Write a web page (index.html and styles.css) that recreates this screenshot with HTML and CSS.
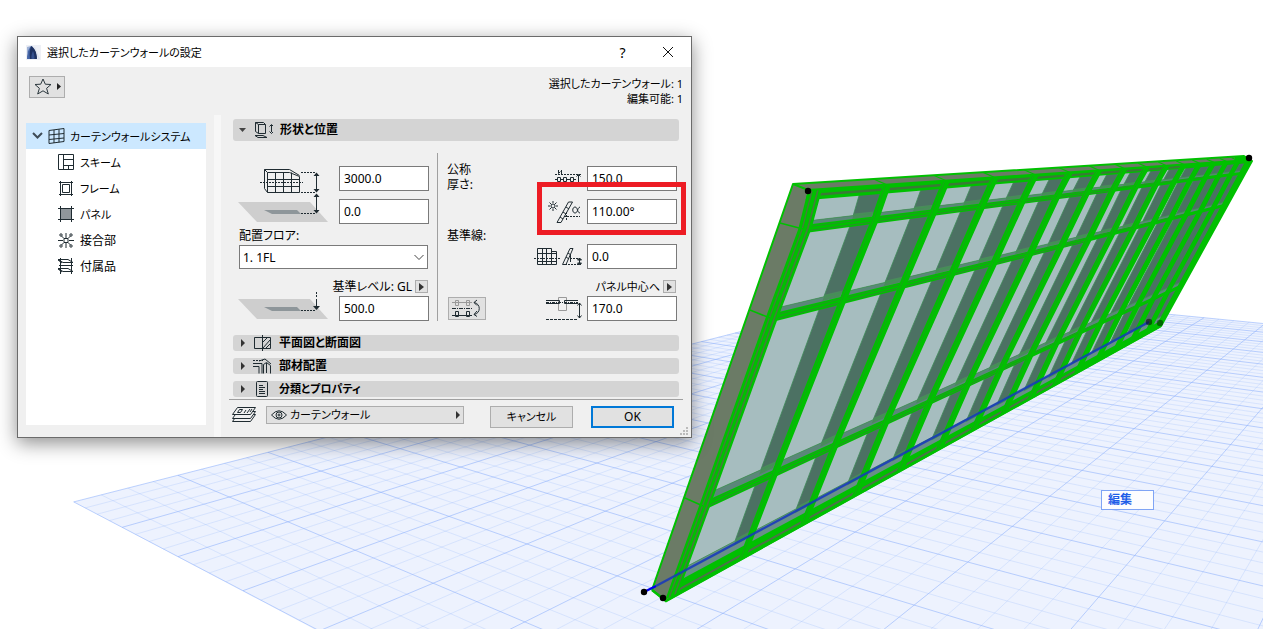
FILE: index.html
```html
<!DOCTYPE html>
<html lang="ja">
<head>
<meta charset="utf-8">
<title>選択したカーテンウォールの設定</title>
<link rel="stylesheet" href="styles.css">
</head>
<body>
<main class="viewport">
  <svg class="scene" id="scene" viewBox="0 0 1263 629" preserveAspectRatio="xMinYMin slice" aria-hidden="true"></svg>
  <button class="edit-tag" type="button">編集</button>

  <section class="dialog" role="dialog" aria-labelledby="dlg-title">
    <header class="titlebar">
      <svg class="app-icon" width="15" height="15" viewBox="0 0 15 15"><path d="M1 2l4-1L1 9z" fill="#9fb2d6"/><path d="M1 14C1 7 3 2 6 1l1 2-3 11z" fill="#4767a8"/><path d="M5 1c4 2 6 7 6 13H4C3 9 4 4 5 1z" fill="#1d3162"/><path d="M5.500 14C5 11 6 8 7 6c1 2 1.500 5 1.500 8z" fill="#35508e"/><path d="M9 2l5 12h-2C11 9 10 5 8 2z" fill="#dde2ee"/></svg>
      <h1 class="title dense" id="dlg-title">選択したカーテンウォールの設定</h1>
      <button class="win-btn" type="button" aria-label="ヘルプ">?</button>
      <button class="win-btn" type="button" aria-label="閉じる"><svg width="12" height="12" viewBox="0 0 12 12"><path d="M1 1l10 10M11 1L1 11" stroke="#111" fill="none"/></svg></button>
    </header>

    <div class="toolbar">
      <button class="fav" type="button" aria-label="お気に入り">
        <svg width="34" height="20" viewBox="0 0 34 20"><path d="M13 2l2.300 5.200 5.700.3-4.400 3.800 1.700 5.700L13 13.800 7.700 17l1.700-5.700L5 7.500l5.700-.3z" fill="none" stroke="#2b373d"/><path d="M27 6l4 3.500-4 3.500z" fill="#222"/></svg>
      </button>
      <p class="counts dense">選択したカーテンウォール: 1<br>編集可能: 1</p>
    </div>

    <div class="body">
      <nav class="tree">
        <ul class="tree-list">
          <li><a class="node root dense" href="#system">
            <svg width="11" height="8" viewBox="0 0 11 8"><path d="M1 1l4.500 4.500L10 1" fill="none" stroke="#3f4c57" stroke-width="2"/></svg>
            <svg width="17" height="17" viewBox="0 0 17 17" class="ic"><path d="M1 2.500L16 .5v13L1 15.500zM6 2v13M11 1.300v13M1 7l15-1.500M1 11.500L16 10"/></svg>
            カーテンウォールシステム</a></li>
          <li><a class="node" href="#scheme"><svg width="17" height="17" viewBox="0 0 17 17" class="ic"><path d="M.5.5h15v15H.5zM5.500.5v15M5.500 5.500h10M5.500 11.500h10M10.500 11.500v4"/></svg><span class="dense">スキーム</span></a></li>
          <li><a class="node" href="#frame"><svg width="17" height="17" viewBox="0 0 17 17" class="ic"><path d="M2.500 2.500h11v12h-11zM4.500 4.500h7v8h-7zM1 2.500h14M1 14.500h14M2.500 1v15M13.500 1v15"/></svg><span class="dense">フレーム</span></a></li>
          <li><a class="node" href="#panel"><svg width="17" height="17" viewBox="0 0 17 17" class="ic"><path fill="#8f969b" d="M2.500 2.500h11v11h-11z"/><path d="M2.500 0v16M13.500 0v16M0 2.500h16M0 13.500h16"/></svg><span class="dense">パネル</span></a></li>
          <li><a class="node" href="#junction"><svg width="17" height="17" viewBox="0 0 17 17" class="ic"><path d="M0 8.500h5M11 8.500h5M8 1v5M8 11v5M3 3.500l3 3M13 3.500l-3 3M3 13.500l3-3M13 13.500l-3-3M6 6.500h4v4H6z"/><g fill="#fff"><circle cx="3" cy="3" r="1.200"/><circle cx="13" cy="3" r="1.200"/><circle cx="3" cy="14" r="1.200"/><circle cx="13" cy="14" r="1.200"/></g></svg>接合部</a></li>
          <li><a class="node" href="#accessory"><svg width="17" height="17" viewBox="0 0 17 17" class="ic"><path d="M2.500 0v16M13.500 0v16M0 1.500h10l5 3H5zM1 7.500h14M0 10.500h10l5 3H5zM0 2l4 3M0 11l4 3"/></svg>付属品</a></li>
        </ul>
      </nav>
      <div class="splitter"></div>

      <div class="settings">
        <div class="sections">
          <button class="section open" type="button">
            <svg width="9" height="6" viewBox="0 0 9 6"><path d="M1 1h7L4.500 5z" fill="#444"/></svg>
            <svg class="ic" width="19" height="18" viewBox="0 0 19 18"><path d="M1.500 1.500h8l2 2v9h-7l-3-2zM4.500 3.500h7M1.500 1.500l3 2v9M1 14.500h8l4 2H4z"/><path d="M17.500 4v7M15.500 5.500l2-2 2 2M15.500 10.500l2 2 2-2"/></svg>
            形状と位置</button>

          <div class="panes">
            <div class="pane left">
              <div class="row">
                <svg width="90" height="58" viewBox="0 0 90 58"><path d="M0 36h72l18 20H19z" fill="#cecece"/><path d="M26 44h33l4 4H34z" fill="#8e969a"/><g class="ic"><path d="M29.500 6.500h22l10 4v16h-32zM37.500 6.500v20M45.500 6.500v20M53.500 6.500v20M29.500 13.500h32M29.500 20.500h32M26.500 3.500h25l10 6M26.500 3.500v19l3 4M26.500 3.500l3 3"/><path stroke-dasharray="2 1" d="M22 16.500h43M63 6.500h15M63 26.500h15M63 47.500h15"/><path d="M78.500 8v17M78.500 29v17"/></g><path class="tip" d="M75.500 10l3-3.500 3 3.500zM75.500 23l3 3.500 3-3.500zM75.500 31l3-3.500 3 3.500zM75.500 44l3 3.500 3-3.500z"/></svg>
                <div class="stack">
                  <input class="field" aria-label="高さ" value="3000.0">
                  <input class="field" aria-label="オフセット" value="0.0">
                </div>
              </div>
              <label class="caption" for="floor">配置フロア:</label>
              <div class="pick">
                <select class="select" id="floor"><option>1. 1FL</option></select>
                <svg class="chev" width="10" height="7" viewBox="0 0 10 7"><path d="M.5 1L5 5.500 9.500 1" fill="none" stroke="#444"/></svg>
              </div>
              <div class="ref"><label for="level">基準レベル: GL</label><button class="mini" type="button" aria-label="基準レベルの選択"></button></div>
              <div class="row">
                <svg width="90" height="25" viewBox="0 4 90 25" overflow="visible"><path d="M0 7h72l18 20H19z" fill="#cecece"/><path d="M26 15h33l4 4H34z" fill="#8e969a"/><path class="ic" stroke-dasharray="2 1" d="M63 18.500h14M78.500 0v6"/><path class="ic" d="M78.500 7v9"/><path class="tip" d="M75 14l3.500 4 3.500-4z"/></svg>
                <input class="field" id="level" value="500.0">
              </div>
            </div>

            <div class="pane right">
              <div class="row">
                <label class="lead two" for="thick">公称<br>厚さ:</label>
                <svg class="ic" width="27" height="17" viewBox="0 0 27 17"><path stroke-dasharray="2 1" d="M0 4.500h26M5 15.500h16"/><path d="M0 9.500h2M5 9.500h4M12 9.500h4M19 9.500h2M2.500 7.500h3v4h-3zM8.500 7.500h3v4h-3zM15.500 7.500h3v4h-3zM3.500 0v3.500l2-2M6.500 0v4"/><path d="M23.500 5v9M21.500 6.500l2-2 2 2M21.500 12.500l2 2 2-2"/></svg>
                <input class="field" id="thick" value="150.0">
              </div>
              <div class="row next">
                <svg class="ic" width="34" height="24" viewBox="0 0 34 24"><circle cx="5" cy="6" r="2"/><path d="M5 1v2M5 9v2M0 6h2M8 6h2M1.500 2.500l2 2M8.500 2.500l-2 2M1.500 9.500l2-2M8.500 9.500l-2-2"/><path d="M9 22.500L20.500 2h4L13 22.500zM15 12l3 2M18 7l3 2M12 17l3 2"/><path d="M32 7c-3 1-2 6-5 6-3 0-3-6 0-6 3 0 2 6 5 6"/><path stroke-dasharray="2 1" d="M16 16.500h16M18.500 12v8"/></svg>
                <input class="field" aria-label="傾斜角度" value="110.00°">
              </div>
              <label class="heading" for="offset">基準線:</label>
              <div class="row">
                <svg class="ic" width="48" height="20" viewBox="0 0 48 20"><path d="M3.500 1.500h14v16h-14zM17.500 4.500h5v13h-5M8.500 1.500v16M12.500 1.500v16M3.500 6.500h19M3.500 14.500h19"/><path stroke-dasharray="2 1" d="M0 11.500h26M31 17.500h16M36 11.500h9"/><path d="M28.500 17.500L36 1.500h3L32 17.500zM32 10l3 2M34 6l3 2M36.500 7v8M45.500 11v6"/><path fill="#2b373d" d="M43.500 13l2-2 2 2zM43.500 16l2 2 2-2z"/></svg>
                <input class="field" id="offset" value="0.0">
              </div>
              <div class="ref"><label class="dense" for="center">パネル中心へ</label><button class="mini" type="button" aria-label="基準の選択"></button></div>
              <div class="row">
                <button class="flip" type="button" aria-label="反転"><svg class="ic" width="30" height="19" viewBox="0 0 30 19"><path stroke="#999" d="M0 3.500h20M3.500 1.500h3v5h-3zM14.500 1.500h3v5h-3z"/><path stroke-dasharray="4 1 1 1" d="M0 9.500h21"/><path d="M0 16.500h20M3.500 12.500h3v5h-3zM14.500 12.500h3v5h-3z"/><path d="M22 3.500c7 1 7 11 0 12M25 1l-3 2.500 3 3M25 12l-3 3.500 3 2"/></svg></button>
                <svg class="ic push" width="36" height="25" viewBox="0 0 36 25"><path stroke="#999" d="M12.500 1.500h8v13h-8z"/><path stroke-dasharray="3 1 1 1" d="M0 6.500h32"/><path d="M0 4.500h13.500v3H0M32 4.500H18.500v3H32"/><path stroke-dasharray="3 1" d="M0 23.500h32"/><path d="M33.500 7v15M31.500 9.500l2-2.500 2 2.500M31.500 19.500l2 2.500 2-2.500"/></svg>
                <input class="field" id="center" value="170.0">
              </div>
            </div>
          </div>

          <div class="closed">
            <button class="section" type="button">
              <svg width="6" height="8" viewBox="0 0 6 8"><path d="M1 0l4 4-4 4z" fill="#333"/></svg>
              <svg class="ic" width="19" height="16" viewBox="0 0 19 16"><path d="M1.500 2.500h8v11h-8zM9.500 0v16M9.500 2.500h8v11h-8zM10 7l5-5M10 13L17 5M13 13l4-4"/></svg>
              平面図と断面図</button>
            <button class="section" type="button">
              <svg width="6" height="8" viewBox="0 0 6 8"><path d="M1 0l4 4-4 4z" fill="#333"/></svg>
              <svg class="ic" width="19" height="16" viewBox="0 0 19 16"><path d="M0 5.500h9v10M0 8.500h6v7M10.500 15.500v-9l3-2 4 3v8M13.500 5v10M6 3l6-2 6 5"/><path stroke-dasharray="2 1" d="M0 2.500h10"/></svg>
              部材配置</button>
            <button class="section" type="button">
              <svg width="6" height="8" viewBox="0 0 6 8"><path d="M1 0l4 4-4 4z" fill="#333"/></svg>
              <svg class="ic" width="19" height="16" viewBox="0 0 19 16"><path d="M3.500 1.500q0-1 1-1h9q1 0 1 1v13q0 1-1 1h-9q-1 0-1-1zM6 4.500h4M6 6.500h6M6 8.500h4M6 10.500h6M6 12.500h6"/></svg>
              <span class="dense">分類とプロパティ</span></button>
          </div>
        </div>

        <footer class="footer">
          <svg class="ic" width="26" height="17" viewBox="0 0 26 17"><path fill="#f0f0f0" d="M1.500 15.500h18l5-7h-18z"/><path fill="#f0f0f0" d="M1.500 12.500h18l5-7h-18z"/><path fill="#f0f0f0" d="M1.500 8.500h18l5-7h-18zM6.500 6.500h3l2-3h-3zM13 7l2-3M16 7l3-4M19 6l2-3"/></svg>
          <button class="layer" type="button">
            <svg class="ic" width="16" height="12" viewBox="0 0 16 12"><path d="M.5 6Q8-2.500 15.500 6 8 14.500.5 6z"/><circle cx="8" cy="6" r="3"/><circle cx="8" cy="6" r="1"/></svg>
            <span class="layer-name dense">カーテンウォール</span>
            <svg width="6" height="8" viewBox="0 0 6 8"><path d="M1 0l4 4-4 4z" fill="#333"/></svg>
          </button>
          <button class="action dense" type="button">キャンセル</button>
          <button class="action primary" type="submit">OK</button>
        </footer>
      </div>
    </div>
    <svg class="grip" width="8" height="8" viewBox="0 0 8 8"><path fill="#bbb" d="M6 0h2v2H6zM3 3h2v2H3zM6 3h2v2H6zM0 6h2v2H0zM3 6h2v2H3zM6 6h2v2H6z"/></svg>
    <div class="marker"></div>
  </section>
</main>
<script src="scene.js"></script>
</body>
</html>
```
FILE: styles.css
```css
* { box-sizing: border-box; }
body, h1, p, ul { margin: 0; padding: 0; }
body, button, input, select {
  font-family: "Noto Sans", "Noto Sans CJK JP", sans-serif;
  font-size: 12px;
  font-feature-settings: "palt";
  color: #000;
}
button { cursor: pointer; }
.dense { font-size: 11px; }
.viewport { position: relative; min-height: 100vh; overflow: hidden; background: #fff; }
.scene { position: absolute; inset: 0; width: 100%; height: 100%; }
.ic { fill: none; stroke: #1f2b31; stroke-width: 1; }
.tip { fill: #1f2b31; }

.edit-tag {
  position: absolute; left: 1101px; top: 490px;
  width: 53px; height: 20px; padding: 0 6px;
  border: 1px solid #7fa4f5; background: #fcfdff;
  color: #1f5fe8; font-weight: 700; text-align: left; line-height: 18px;
}

.dialog {
  position: absolute; left: 17px; top: 36px; width: 675px;
  display: flex; flex-direction: column;
  background: #f0f0f0; border: 1px solid #6b6b6b;
  box-shadow: 0 5px 18px rgba(0, 0, 0, .45);
}
.titlebar { display: flex; align-items: center; height: 30px; padding: 0 1px 0 8px; background: #fff; }
.title { flex: 1; margin-left: 6px; font-weight: 400; }
.app-icon { background: #eef0f6; }
.win-btn { width: 45px; height: 30px; padding: 0; border: 0; background: none; font-size: 14px; }

.toolbar { display: flex; justify-content: space-between; align-items: flex-start; height: 48px; padding: 9px 8px 0 11px; }
.fav { display: flex; width: 36px; height: 22px; padding: 0; border: 1px solid #adadad; background: #e1e1e1; }
.counts { text-align: right; line-height: 15px; }

.body { display: flex; height: 322px; }
.tree { width: 180px; margin: 8px 8px 12px; background: #fff; }
.tree-list { list-style: none; }
.node { display: flex; align-items: center; gap: 5px; height: 26px; padding-left: 32px; color: #000; text-decoration: none; }
.root { padding-left: 6px; background: #cce8ff; }
.splitter { width: 7px; background: #f7f7f7; }

.settings { flex: 1; display: flex; flex-direction: column; padding: 4px 8px 9px; }
.sections { padding: 0 4px 2px; }
.section {
  display: flex; align-items: center; gap: 7px; width: 100%; height: 16px; padding: 0 7px;
  border: 0; border-radius: 3px; background: #d4d4d4; font-weight: 700; line-height: 16px;
}
.open { height: 22px; padding: 0 5px; }
.closed { display: flex; flex-direction: column; gap: 7px; }

.panes { display: flex; height: 194px; padding: 12px 2px 14px 5px; }
.pane { display: flex; flex-direction: column; padding-top: 13px; }
.left { width: 200px; padding-right: 8px; border-right: 1px solid #a0a0a0; }
.right { flex: 1; padding-left: 9px; }
.row { display: flex; align-items: center; justify-content: flex-end; gap: 5px; }
.left .row { gap: 11px; }
.next { margin-top: 8px; }
.stack { display: flex; flex-direction: column; gap: 8px; }
.field { width: 90px; height: 25px; padding: 0 4px; border: 1px solid #7a7a7a; background: #fff; }
.caption, .heading { height: 21px; padding: 1px 1px 0; line-height: 21px; }
.heading { height: 20px; padding: 1px 0 0; }
.lead { margin-right: auto; }
.two { line-height: 15px; margin-top: -8px; margin-bottom: -4px; }
.pick { position: relative; height: 24px; margin: 0 1px; }
.select { width: 100%; height: 24px; padding: 0 5px 0 3px; border: 1px solid #7a7a7a; background: #fff; appearance: none; }
.chev { position: absolute; right: 4px; top: 9px; }
.ref { display: flex; justify-content: flex-end; gap: 3px; height: 13px; margin: 11px 1px 3px 0; line-height: 14px; }
.mini { display: flex; align-items: center; justify-content: center; width: 13px; height: 13px; padding: 0; border: 1px solid #adadad; background: #e1e1e1; }
.mini::after { content: ""; border: 4px solid transparent; border-right: 0; border-left: 5px solid #333; }
.flip { display: flex; align-items: center; justify-content: center; width: 38px; height: 23px; margin-left: 1px; padding: 0; border: 1px solid #adadad; background: #e1e1e1; }
.push { margin-left: auto; }

.footer { display: flex; align-items: flex-start; padding: 6px 9px 0 2px; border-top: 1px solid #a0a0a0; }
.layer { display: flex; align-items: center; gap: 3px; width: 198px; height: 18px; margin: 0 26px 0 9px; padding: 0 2px 0 4px; border: 1px solid #adadad; background: #e1e1e1; }
.layer-name { flex: 1; text-align: left; line-height: 16px; }
.action { width: 83px; height: 22px; padding: 0; border: 1px solid #adadad; background: #e1e1e1; line-height: 18px; }
.primary { margin-left: auto; border: 2px solid #0078d7; }
.grip { position: absolute; right: 3px; bottom: 2px; }
.marker { position: absolute; left: 519px; top: 145px; width: 149px; height: 53px; border: 5px solid #ed1c24; pointer-events: none; }
```
FILE: scene.js
```js
const NS = 'http://www.w3.org/2000/svg';
const scene = document.getElementById('scene');

function draw(tag, attrs) {
  const el = document.createElementNS(NS, tag);
  for (const k in attrs) el.setAttribute(k, attrs[k]);
  scene.appendChild(el);
}
const join = pts => pts.map(p => p[0].toFixed(1) + ',' + p[1].toFixed(1)).join(' ');
const poly = (pts, fill, extra) => draw('polygon', Object.assign({ points: join(pts), fill }, extra));
const line = (pts, stroke, width, extra) => draw('polyline', Object.assign({ points: join(pts), stroke, 'stroke-width': width, fill: 'none' }, extra));

// Ground grid: plane coordinates to view coordinates
const G = [40.502, 118.277, 73.737, -9.079, 10.993, 501.889, -0.06548, 0.07911];
const ground = (u, v) => {
  const w = 1 + G[6] * u + G[7] * v;
  return [(G[0] * u + G[1] * v + G[2]) / w, (G[3] * u + G[4] * v + G[5]) / w];
};
const DEPTH = 18;
const firstV = u => Math.max(0, (0.12 - 1 + 0.06548 * u) / 0.07911);
poly([ground(0, 0), ground(0, DEPTH), ground(12, DEPTH), [1500, 700], [448, 700]], '#edf2fe');
for (let i = 0; i <= 120; i++) {
  const u = i / 4, v0 = firstV(u);
  if (v0 < DEPTH) line([ground(u, v0), ground(u, DEPTH)], '#8fb2fb', 1, { opacity: i % 4 ? 0.24 : 0.58 });
}
for (let i = 0; i <= DEPTH * 4; i++) {
  const v = i / 4, uEnd = (0.88 + 0.07911 * v) / 0.06548;
  line([ground(0, v), ground(uEnd, v)], '#8fb2fb', 1, { opacity: i % 4 ? 0.24 : 0.58 });
}

// Curtain wall: one rail per frame line, each with its own foreshortening
// s: height position, x/y: both ends, first: x of the first mullion
const END = 15;
const rails = [
  { s: 0, x: [813, 1249], y: [190, 160], first: 887 },
  { s: 0.11, x: [803, 1242], y: [229, 173], first: 875 },
  { s: 0.34, x: [770, 1225], y: [318, 205], first: 843 },
  { s: 0.797, x: [703, 1181], y: [506, 286], first: 775 },
  { s: 1, x: [670, 1161], y: [597, 325], first: 743 }
].map(r => {
  const d = r.first - r.x[0], span = r.x[1] - r.x[0];
  const b = (END * d - span) / (END * (span - d));
  return Object.assign(r, { a: d * (1 + b), b });
});
const onRail = (r, t) => {
  const dx = r.a * t / (1 + r.b * t);
  return [r.x[0] + dx, r.y[0] + dx * (r.y[1] - r.y[0]) / (r.x[1] - r.x[0])];
};
const P = (t, s) => {
  let i = 0;
  while (i < rails.length - 2 && s > rails[i + 1].s) i++;
  const f = (s - rails[i].s) / (rails[i + 1].s - rails[i].s);
  const p = onRail(rails[i], t), q = onRail(rails[i + 1], t);
  return [p[0] + (q[0] - p[0]) * f, p[1] + (q[1] - p[1]) * f];
};
const column = t => rails.map(r => onRail(r, t));
const upright = (t0, t1, fill, extra) => poly([...column(t0), ...column(t1).reverse()], fill, extra);
const quad = (t0, t1, s0, s1, fill, extra) => poly([P(t0, s0), P(t1, s0), P(t1, s1), P(t0, s1)], fill, extra);

const GREEN = '#00c000', DARK = '#2c8c2c';
const defs = document.createElementNS(NS, 'clipPath');
defs.id = 'hull';
const hull = document.createElementNS(NS, 'polygon');
const HULL = [[652, 590], [793, 184], [1244, 156], [1252, 161], [1161, 326], [666, 601]];
hull.setAttribute('points', join(HULL));
defs.appendChild(hull);
scene.appendChild(defs);
const clip = { 'clip-path': 'url(#hull)' };

poly(HULL, '#6b7b66');
upright(0, END, '#4c7163', clip);
const rows = [[0, 0.11, 0.022], [0.11, 0.34, 0.024], [0.34, 0.797, 0.03], [0.797, 1, 0.06]];
const edge = (n, s) => n - (0.33 - 0.12 * s + 0.04 * n);
for (let t = 0; t < END; t++) {
  for (const [a, b, ledge] of rows) {
    const n = t + 1, floor = b - ledge;
    if (edge(n, a) > t + 0.07 + 0.011 * t) {
      poly([P(t, a), P(edge(n, a), a), P(edge(n, floor), floor), P(t, floor)], '#a6bdbf', clip);
      line([P(edge(n, a), a), P(edge(n, floor), floor)], '#3f8a58', 0.8, clip);
    }
    quad(t, n, floor, b, b === 1 ? '#688f88' : '#5b8779', clip);
    if (t < 9) quad(edge(n, b), n - 0.07, floor - 0.006, floor + 0.012, '#4b8a5c', clip);
    line([P(t, floor), P(n, floor)], '#3f9650', 0.7, clip);
  }
}
for (const s of [0.11, 0.34, 0.797]) {
  quad(0, END, s - 0.011, s + 0.012, GREEN, clip);
  line([P(0, s - 0.005), P(12, s - 0.005)], DARK, 0.8, clip);
  line([P(0, s + 0.006), P(7, s + 0.006)], DARK, 1, clip);
}
quad(-0.06, END, 0, 0.028, GREEN, clip);
line([P(0, 0.014), P(10, 0.014)], '#3a7a36', 2.4, clip);
quad(0, END, 0.968, 1.01, GREEN, clip);
line([P(0, 0.993), P(10, 0.993)], '#4b7347', 2, clip);
for (let t = 1; t < END; t++) {
  const h = 0.05 + 0.014 * t;
  upright(t - h, t + h, GREEN, clip);
  if (t < 10) line(column(t - h * 0.4), '#1d9d1d', 0.8, clip);
}
upright(-0.06, 0.11, GREEN, clip);
line(column(-0.01), '#467a3c', 1.4, clip);
line(column(0.06), '#467a3c', 1.6, clip);

// Side and top faces of the outer frame
for (const [x1, y1, s] of [[780, 223, 0.11], [750, 310, 0.34], [685, 498, 0.797]]) line([[x1, y1], P(0, s)], GREEN, 1.5);
for (let t = 1; t < END; t++) {
  const p = P(t, 0), k = 1 / (1 + 0.1 * t);
  line([p, [p[0] - 16 * k, p[1] - 7 * k]], GREEN, 1.2, clip);
}
line([...HULL, HULL[0]], GREEN, 2, { 'stroke-linejoin': 'round' });
line([[793, 184], [808, 190], [1250, 160]], GREEN, 2);
line([[652, 590], [666, 601], [1161, 326]], GREEN, 2.4);
line([[1235, 157], [1250, 159], [1160, 325]], GREEN, 6, clip);

// Reference line and hotspots
line([[644, 592], [656, 586]], '#0000ee', 2.4);
line([[656, 586], [1149, 322]], '#1537bd', 2.4, { opacity: 0.85 });
for (const [cx, cy, o] of [[808, 191, 1], [1249, 158, 1], [644, 592, 1], [663, 598, 1], [1149, 322, 0.5], [1160, 323, 0.45]])
  draw('circle', { cx, cy, r: 3.2, fill: '#000', opacity: o });
```
